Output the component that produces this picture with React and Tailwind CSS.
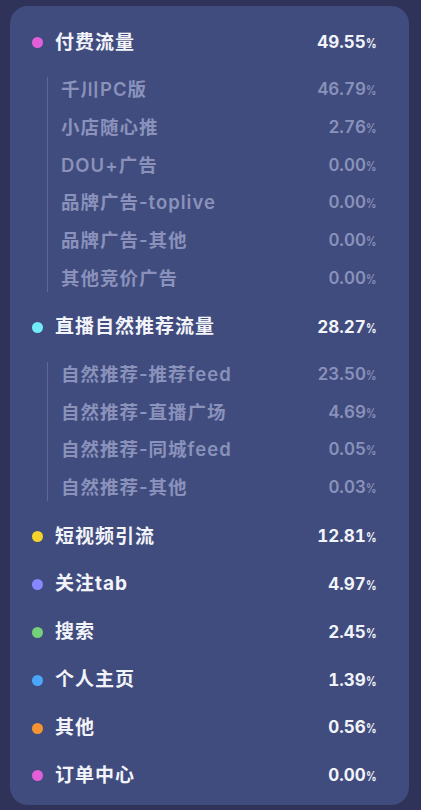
import React from "react";

const GROUPS = [
  {
    name: "付费流量", value: "49.55", dot: "bg-[#e35fd9]",
    children: [
      ["千川PC版", "46.79"],
      ["小店随心推", "2.76"],
      ["DOU+广告", "0.00"],
      ["品牌广告-toplive", "0.00"],
      ["品牌广告-其他", "0.00"],
      ["其他竞价广告", "0.00"],
    ],
  },
  {
    name: "直播自然推荐流量", value: "28.27", dot: "bg-[#72ecf6]",
    children: [
      ["自然推荐-推荐feed", "23.50"],
      ["自然推荐-直播广场", "4.69"],
      ["自然推荐-同城feed", "0.05"],
      ["自然推荐-其他", "0.03"],
    ],
  },
  { name: "短视频引流", value: "12.81", dot: "bg-[#f6d32b]" },
  { name: "关注tab", value: "4.97", dot: "bg-[#8987ff]" },
  { name: "搜索", value: "2.45", dot: "bg-[#74d17a]" },
  { name: "个人主页", value: "1.39", dot: "bg-[#4ba6fa]" },
  { name: "其他", value: "0.56", dot: "bg-[#f79330]" },
  { name: "订单中心", value: "0.00", dot: "bg-[#e35fd9]" },
];

function Pct({ v }) {
  return (
    <span className="tabular-nums">
      {v}
      <span className="inline-block text-[13px] tracking-[-1px] scale-x-[0.8] origin-left">%</span>
    </span>
  );
}

export default function App() {
  return (
    <div
      className="w-[421px] h-[810px] bg-[#2f3359] pt-[6px] pl-[10px]"
      style={{ fontFamily: 'Inter, "Noto Sans CJK SC", sans-serif' }}
    >
      <div className="w-[399px] h-[799px] rounded-[18px] bg-[#414c7e] pt-[13px] pl-[22px] pr-[31px]">
        {GROUPS.map((g) => (
          <div key={g.name}>
            <div className="h-[47.8px] flex items-center">
              <span className={`w-[11px] h-[11px] rounded-full ${g.dot}`} />
              <span className="ml-[12px] text-[19px] font-bold text-[#f2f4fa] tracking-[1px]">{g.name}</span>
              <span className="ml-auto text-[17px] font-bold text-[#f2f4fa]">
                <Pct v={g.value} />
              </span>
            </div>
            {g.children && (
              <div className="ml-[15px] mt-[10px] mb-[12px] border-l border-[#5f6895] pl-[13px] flex flex-col gap-[11.8px]">
                {g.children.map(([n, v]) => (
                  <div key={n} className="h-[26px] flex items-center text-[#8a92bb] font-semibold">
                    <span className="text-[18.5px] tracking-[1px]">{n}</span>
                    <span className="ml-auto text-[17px]">
                      <Pct v={v} />
                    </span>
                  </div>
                ))}
              </div>
            )}
          </div>
        ))}
      </div>
    </div>
  );
}
